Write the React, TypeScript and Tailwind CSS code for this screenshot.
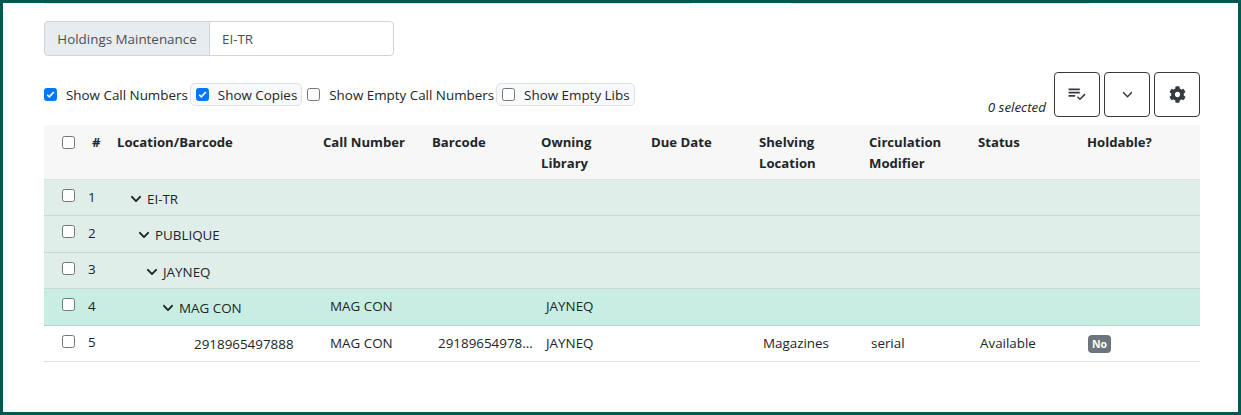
import React from "react";

function Check({ on = false }: { on?: boolean }) {
  return (
    <span className={`inline-flex h-[13px] w-[13px] shrink-0 items-center justify-center rounded-[2.5px] border ${on ? "border-[#0075ff] bg-[#0075ff]" : "border-[#767676] bg-white"}`}>
      {on && (
        <svg viewBox="0 0 13 13" className="h-[13px] w-[13px]">
          <path d="M2.5 6.8 5.2 9.3 10.4 3.6" fill="none" stroke="white" strokeWidth="2" />
        </svg>
      )}
    </span>
  );
}

function Chevron({ size = 10 }: { size?: number }) {
  return (
    <svg viewBox="0 0 448 512" width={size} height={size} fill="#212529" className="shrink-0">
      <path d="M207 381 12 186c-9-9-9-24 0-34l23-23c9-9 24-9 34 0l155 155 155-155c9-9 24-9 34 0l23 23c9 9 9 24 0 34L241 381c-9 9-25 9-34 0z" />
    </svg>
  );
}

const cols = "grid grid-cols-[41px_32px_206px_109px_109px_110px_108px_110px_109px_109px_113px]";

const rows = [
  { n: 1, indent: 14, label: "EI-TR", bg: "bg-[#e0eee9]", border: "border-[#c9d6d1]", chev: true },
  { n: 2, indent: 22, label: "PUBLIQUE", bg: "bg-[#e0eee9]", border: "border-[#c9d6d1]", chev: true },
  { n: 3, indent: 30, label: "JAYNEQ", bg: "bg-[#e0eee9]", border: "border-[#c9d6d1]", chev: true },
  { n: 4, indent: 46, label: "MAG CON", bg: "bg-[#c8eee3]", border: "border-[#b4d6cc]", chev: true, call: "MAG CON", owner: "JAYNEQ" },
  {
    n: 5, indent: 78, label: "2918965497888", bg: "bg-white", border: "border-[#dee2e6]", chev: false,
    call: "MAG CON", owner: "JAYNEQ", barcode: "29189654978...", shelf: "Magazines", circ: "serial", status: "Available", hold: true,
  },
];

function HeaderCell({ children }: { children: React.ReactNode }) {
  return <div className="pt-[7px] text-[13.15px] font-bold leading-[21px] text-[#212529]">{children}</div>;
}

function Cell({ children, dx = 7 }: { children?: React.ReactNode; dx?: number }) {
  return <div className="truncate pt-[7px] leading-[21px]" style={{ paddingLeft: dx }}>{children}</div>;
}

export default function App() {
  return (
    <div className="box-border h-[415px] w-[1241px] overflow-hidden border-[3px] border-[#00594f] bg-white font-['Open_Sans','Noto_Sans',sans-serif] text-[13.4px] text-[#212529]">
      <div className="ml-[41px] w-[1156px]">
        <div className="flex h-[2px] items-start">
          <div className="h-[1px] w-[648px] bg-[#dfe3e6]" />
          <div className="h-[1px] w-[99px]" />
          <div className="h-[1px] w-[298px] bg-[#dfe3e6]" />
        </div>

        <div className="mt-[16px] flex h-[35px] w-[350px] text-[#495057]">
          <div className="flex w-[166px] items-center justify-center rounded-l-[4px] border border-[#ced4da] bg-[#e9ecef] pt-[1px]">Holdings Maintenance</div>
          <div className="-ml-px flex flex-1 items-center rounded-r-[4px] border border-[#ced4da] bg-white pt-[1px] pl-[12px]">EI-TR</div>
        </div>

        <div className="mt-[16px] flex h-[53px] items-start justify-between">
          <div className="mt-[11px] flex items-center">
            <Check on />
            <span className="ml-[9px] pt-[1px]">Show Call Numbers</span>
            <div className="ml-[2px] flex h-[23px] items-center rounded-[5px] border border-[#dee2e6] bg-[#f8f9fa] pr-[4px] pl-[5px]">
              <Check on />
              <span className="ml-[9px] pt-[1px]">Show Copies</span>
            </div>
            <div className="ml-[5px] flex items-center">
              <Check />
              <span className="ml-[9px] pt-[1px]">Show Empty Call Numbers</span>
            </div>
            <div className="ml-[2px] flex h-[23px] items-center rounded-[5px] border border-[#dee2e6] bg-[#f8f9fa] pr-[4px] pl-[5px]">
              <Check />
              <span className="ml-[9px] pt-[1px]">Show Empty Libs</span>
            </div>
          </div>
          <div className="flex items-start">
            <span className="mt-[25px] mr-[8px] italic">0 selected</span>
            <button className="flex h-[45px] w-[46px] items-center justify-center rounded-[4px] border border-[#343a40]">
              <svg viewBox="0 0 20 16" className="h-[15px] w-[20px]" fill="none" stroke="#343a40">
                <path d="M1 2.5h12M1 6h12M1 9.500h7" strokeWidth="1.8" />
                <path d="M10.500 10.500l2.600 2.600 5.500-5.500" strokeWidth="1.6" />
              </svg>
            </button>
            <button className="ml-[4px] flex h-[45px] w-[46px] items-center justify-center rounded-[4px] border border-[#343a40]">
              <svg viewBox="0 0 12 8" className="h-[7px] w-[11px]" fill="none" stroke="#343a40" strokeWidth="1.7">
                <path d="M1 1.500l5 5 5-5" />
              </svg>
            </button>
            <button className="ml-[4px] flex h-[45px] w-[46px] items-center justify-center rounded-[4px] border border-[#343a40]">
              <svg viewBox="0 0 512 512" className="h-[17px] w-[17px]" fill="#343a40">
                <path d="M487.400 315.700l-42.600-24.600c4.300-23.200 4.300-47 0-70.200l42.600-24.600c4.900-2.800 7.100-8.600 5.500-14-11.100-35.600-30-67.800-54.700-94.600-3.800-4.100-10-5.100-14.800-2.300L380.800 110c-17.900-15.400-38.500-27.300-60.800-35.100V25.800c0-5.600-3.900-10.500-9.400-11.700-36.700-8.200-74.300-7.800-109.200 0-5.500 1.200-9.400 6.100-9.400 11.700V75c-22.200 7.900-42.800 19.800-60.800 35.100L88.700 85.500c-4.900-2.800-11-1.900-14.800 2.300-24.700 26.700-43.600 58.900-54.700 94.600-1.700 5.400.6 11.200 5.500 14L67.300 221c-4.300 23.200-4.300 47 0 70.200l-42.600 24.600c-4.900 2.800-7.100 8.600-5.500 14 11.100 35.600 30 67.800 54.700 94.600 3.800 4.100 10 5.100 14.800 2.300l42.600-24.600c17.900 15.400 38.500 27.300 60.800 35.100v49.200c0 5.600 3.900 10.500 9.400 11.700 36.700 8.200 74.300 7.800 109.200 0 5.500-1.200 9.400-6.100 9.400-11.700v-49.200c22.200-7.900 42.800-19.800 60.800-35.100l42.600 24.600c4.900 2.800 11 1.900 14.800-2.300 24.700-26.700 43.600-58.900 54.700-94.600 1.500-5.500-.7-11.300-5.600-14.100zM256 336c-44.100 0-80-35.900-80-80s35.900-80 80-80 80 35.900 80 80-35.900 80-80 80z" />
              </svg>
            </button>
          </div>
        </div>

        <div className={`${cols} h-[55px] border-b border-[#dee2e6] bg-[#f7f7f7]`}>
          <div className="pt-[9px] pl-[18px]"><Check /></div>
          <div className="pl-[7px]"><HeaderCell>#</HeaderCell></div>
          <HeaderCell>Location/Barcode</HeaderCell>
          <HeaderCell>Call Number</HeaderCell>
          <HeaderCell>Barcode</HeaderCell>
          <HeaderCell>Owning<br />Library</HeaderCell>
          <HeaderCell>Due Date</HeaderCell>
          <HeaderCell>Shelving<br />Location</HeaderCell>
          <HeaderCell>Circulation<br />Modifier</HeaderCell>
          <HeaderCell>Status</HeaderCell>
          <HeaderCell>Holdable?</HeaderCell>
        </div>

        {rows.map((r) => (
          <div key={r.n} className={`${cols} h-[36.4px] border-b ${r.bg} ${r.border}`}>
            <div className="pt-[7px] pl-[18px]"><Check /></div>
            <div className="pt-[6.5px] pl-[3px] leading-[21px]">{r.n}</div>
            <div className="flex items-center pt-[2.5px]" style={{ paddingLeft: r.indent - 1 }}>
              {r.chev && <span className="mr-[5px]"><Chevron size={12} /></span>}
              <span>{r.label}</span>
            </div>
            <Cell>{r.call}</Cell>
            <Cell dx={6}>{r.barcode}</Cell>
            <Cell dx={5}>{r.owner}</Cell>
            <Cell />
            <Cell dx={4}>{r.shelf}</Cell>
            <Cell dx={2}>{r.circ}</Cell>
            <Cell dx={2}>{r.status}</Cell>
            <div className="pt-[7px] pl-[1px]">
              {r.hold && <span className="inline-block rounded-[4px] bg-[#6c757d] px-[4px] py-[2px] text-[10.5px] leading-[14px] font-bold text-white">No</span>}
            </div>
          </div>
        ))}
      </div>
    </div>
  );
}
